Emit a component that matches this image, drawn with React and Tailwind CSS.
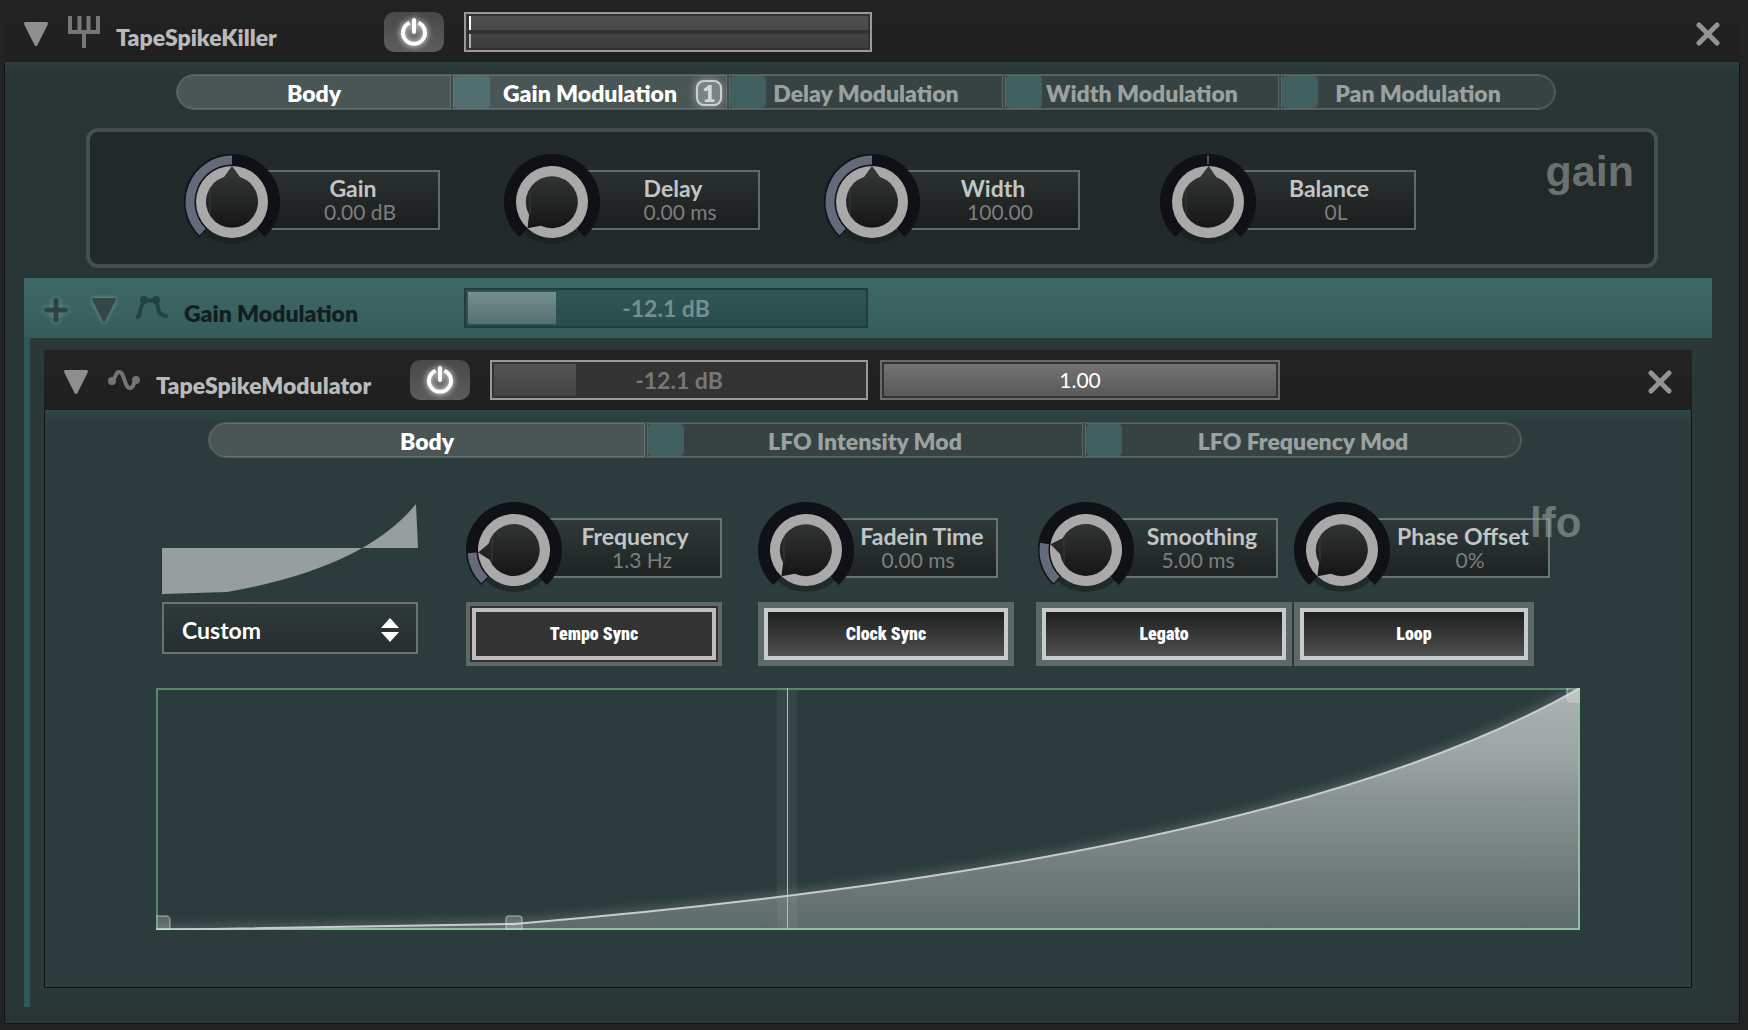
const deviceTabs = [
  { label: 'Body', active: true },
  { label: 'Gain Modulation', slot: true, active: true, count: 1 },
  { label: 'Delay Modulation', slot: true },
  { label: 'Width Modulation', slot: true },
  { label: 'Pan Modulation', slot: true },
];

const modulatorTabs = [
  { label: 'Body', active: true },
  { label: 'LFO Intensity Mod', slot: true },
  { label: 'LFO Frequency Mod', slot: true },
];

const KNOB_RANGE = 137;

// angle is measured clockwise from twelve o'clock
function polar(angle, r) {
  const a = (angle * Math.PI) / 180;
  return `${(r * Math.sin(a)).toFixed(2)} ${(-r * Math.cos(a)).toFixed(2)}`;
}

function arc(from, to, r) {
  return `M${polar(from, r)}A${r} ${r} 0 ${to - from > 180 ? 1 : 0} 1 ${polar(to, r)}`;
}

function KnobDial({ id, angle, from = -KNOB_RANGE }) {
  return (
    <svg viewBox="-48 -48 96 96" className="relative z-10 size-24 shrink-0" aria-hidden="true">
      <defs>
        <linearGradient id={id} x1="0" y1="0" x2="0" y2="1">
          <stop offset="0.1" stopColor="#333636" />
          <stop offset="0.85" stopColor="#161616" />
        </linearGradient>
      </defs>
      <circle cy="0" r="42" fill="#16201e" fillOpacity="0.6" />
      <path d={arc(-KNOB_RANGE, KNOB_RANGE, 42)} fill="none" stroke="#101116" strokeWidth="12" />
      {angle > from && (
        <path d={arc(from === -KNOB_RANGE ? from + 1.5 : from, angle, 42)} fill="none" stroke="#656a7b" strokeWidth="9" />
      )}
      <circle r="35.5" fill={`url(#${id})`} />
      <path d="M-22-12V12" stroke="#3a3d3d" strokeWidth="1" />
      <path
        d="M0-36A36 36 0 1 1 0 36A36 36 0 1 1 0-36ZM0-36L8-25A26 26 0 1 1-8-25Z"
        fill="#a9a9a9"
        fillRule="evenodd"
        transform={`rotate(${angle})`}
      />
    </svg>
  );
}

function Knob({ id, label, value, angle, from, narrow, lfo }) {
  return (
    <label className={`relative flex items-start ${narrow ? 'w-60' : 'w-64'}`}>
      <KnobDial id={id} angle={angle} from={from} />
      <span
        className={`mt-4 -ml-12 flex h-15 flex-1 flex-col justify-center border-2 text-center whitespace-nowrap ${
          lfo ? 'border-[#697372] bg-linear-to-b from-[#303a3b] to-[#1e2323]' : 'border-[#656868] bg-linear-to-b from-[#2a3030] to-[#1b1e1e]'
        }`}
      >
        <span className={`text-[23px] leading-6 font-bold text-[#c3c5c5] ${narrow ? 'pl-10' : 'pl-[34px]'}`}>{label}</span>
        <span className={`text-[21px] leading-6 text-[#7b7f7f] ${narrow ? 'pl-8' : 'pl-12'}`}>{value}</span>
      </span>
      <input
        type="range"
        min={-KNOB_RANGE}
        max={KNOB_RANGE}
        defaultValue={angle}
        className="absolute inset-0 z-20 h-full w-full cursor-pointer opacity-0"
      />
    </label>
  );
}

function Tabs({ tabs, label }) {
  return (
    <div role="tablist" aria-label={label} className="flex h-9 gap-0.5 overflow-hidden rounded-full border border-[#505b5a] bg-[#3d4847]">
      {tabs.map((tab, i) => (
        <button
          key={tab.label}
          type="button"
          role="tab"
          aria-selected={!!tab.active}
          className={`relative flex flex-1 items-center justify-center border pt-0.5 text-[23px] font-extrabold whitespace-nowrap ${
            i === 0 ? 'rounded-l-full' : ''
          } ${i === tabs.length - 1 ? 'rounded-r-full' : ''} ${
            tab.active ? 'border-[#667170] bg-[#4a5555] text-white' : 'border-[#5a6564] bg-[#374243] text-[#9aa1a0]'
          }`}
        >
          {tab.slot && (
            <span className={`absolute inset-y-0 left-0 w-9 rounded ${tab.active ? 'bg-[#526f6f]' : 'bg-[#3f605e]'}`} />
          )}
          {tab.label}
          {tab.count && (
            <span className="absolute top-1 right-1 flex size-[26px] items-center justify-center rounded-lg border-2 border-[#ccd0d0] bg-[#7b8484] leading-none text-[#d6d9d9] shadow-[0_0_8px_#a0a8a8]">
              {tab.count}
            </span>
          )}
        </button>
      ))}
    </div>
  );
}

function Collapse({ tone }) {
  return (
    <button type="button" aria-label="Collapse" className="mt-1 shrink-0">
      <svg viewBox="0 0 24 24" className={`block size-6 overflow-visible ${tone}`} fill="currentColor" stroke="currentColor" strokeWidth="3" strokeLinejoin="round">
        <path d="M1.5 1.5H22.5L12 22.5Z" />
      </svg>
    </button>
  );
}

function Power({ label }) {
  return (
    <button
      type="button"
      aria-label={label}
      aria-pressed="true"
      className="flex h-10 w-15 shrink-0 items-center justify-center rounded-[10px] bg-linear-to-b from-[#484848] to-[#5c5c5c]"
    >
      <svg viewBox="0 0 28 28" className="size-7 overflow-visible drop-shadow-[0_0_3px_#ffffff]" fill="none" stroke="#fff" strokeWidth="4">
        <path d="M9.5 4.8A11 11 0 1 0 18.5 4.8" />
        <path d="M14 2V14" strokeLinecap="round" />
      </svg>
    </button>
  );
}

function Close() {
  return (
    <button type="button" aria-label="Remove" className="mt-1 ml-auto shrink-0">
      <svg viewBox="0 0 24 24" className="block size-6" fill="none" stroke="#939393" strokeWidth="5" strokeLinecap="round">
        <path d="M3 3L21 21M21 3L3 21" />
      </svg>
    </button>
  );
}

function SyncButton({ children, active, className = '' }) {
  return (
    <button
      type="button"
      className={`flex h-16 border-[#5c6968] font-['Impact','Roboto_Condensed','Roboto',sans-serif] text-lg font-black text-white ${
        active ? 'border-4 bg-[#352f2f] p-0.5' : 'border-6'
      } ${className}`}
    >
      <span
        className={`flex h-full w-full items-center justify-center border-4 ${
          active ? 'border-[#bebebe] bg-[#333333]' : 'border-[#c5cccb] bg-linear-to-b from-[#1e1f1f] to-[#505050]'
        }`}
      >
        {children}
      </span>
    </button>
  );
}

function CurveEditor() {
  return (
    <svg viewBox="0 0 1424 242" preserveAspectRatio="none" className="mx-[111px] mt-[22px] block h-[242px] w-auto" role="img" aria-label="LFO curve">
      <defs>
        <linearGradient id="curve-fill" gradientUnits="userSpaceOnUse" x1="0" y1="0" x2="0" y2="242">
          <stop offset="0" stopColor="#aeb4b4" />
          <stop offset="0.3" stopColor="#9aa3a2" />
          <stop offset="0.45" stopColor="#8b9494" />
          <stop offset="0.75" stopColor="#717d7c" />
          <stop offset="1" stopColor="#5c6a6a" />
        </linearGradient>
        <filter id="curve-glow" x="-5%" y="-5%" width="110%" height="110%">
          <feGaussianBlur stdDeviation="5" />
        </filter>
      </defs>
      <path d="M0 242L358 236Q1126 172 1424 0" fill="none" stroke="#a0aaaa" strokeWidth="6" strokeOpacity="0.4" filter="url(#curve-glow)" />
      <path d="M0 242L358 236Q1126 172 1424 0V242Z" fill="url(#curve-fill)" />
      <rect x="621" y="0" width="20" height="242" fill="#fff" fillOpacity="0.05" />
      <path d="M1 242V1H1424" fill="none" stroke="#57886c" strokeWidth="2" />
      <path d="M0 241H1423V0" fill="none" stroke="#8fbfa2" strokeWidth="2" />
      <path d="M0 242L358 236Q1126 172 1424 0" fill="none" stroke="#c9cccc" strokeWidth="2" />
      <g fill="#fff" fillOpacity="0.22" stroke="#d2d8d8" strokeOpacity="0.5" strokeWidth="1.5">
        <rect x="-6" y="228" width="20" height="22" rx="4" />
        <rect x="350" y="228" width="16" height="22" rx="3" />
        <rect x="1411" y="-8" width="20" height="22" rx="4" />
      </g>
      <path d="M631.5 0V242" stroke="#b5bcbc" strokeWidth="1" />
    </svg>
  );
}

export default function App() {
  return (
    <div className="min-h-screen bg-[#232323] pr-2 pb-[6px] pl-1 font-['Lato',sans-serif]">
      {/* Device header */}
      <header className="flex h-[62px] items-center bg-linear-to-b from-[#232323] to-[#1f1f1f] px-5 pt-0.5">
        <Collapse tone="text-[#8f8f8f]" />
        <svg viewBox="0 0 32 32" className="mr-4 ml-5 size-8 shrink-0" fill="none" stroke="#777" strokeWidth="4">
          <path d="M2 0V16H30V0M11.5 0V16M20.5 0V16M16 16V32" />
        </svg>
        <h1 className="w-[268px] shrink-0 pt-2.5 text-[23px] font-extrabold text-[#bababa]">TapeSpikeKiller</h1>
        <Power label="TapeSpikeKiller power" />
        <div className="ml-5 flex h-10 w-[408px] flex-col gap-1 border-2 border-[#999999] bg-[#333333] py-0.5 pr-0.5 pl-[3px]">
          <div className="flex-1 border-l-2 border-white bg-linear-to-b from-[#505050] to-[#494949]" />
          <div className="flex-1 border-l-2 border-[#b0b0b0] bg-linear-to-b from-[#454545] to-[#3d3d3d]" />
        </div>
        <Close />
      </header>

      <main className="border-x border-b border-[#121414] bg-[#293434] bg-linear-to-b from-[#2d3f3e] to-[#293434] to-[14px] pt-3 pr-[27px] pb-4 pl-[19px]">
        <div className="mr-[156px] ml-[152px]">
          <Tabs tabs={deviceTabs} label="TapeSpikeKiller chains" />
        </div>

        {/* Gain stage */}
        <section className="mt-[18px] mr-[54px] ml-[62px] flex h-[140px] rounded-xl border-4 border-[#454f4e] bg-[#22292a] pt-[22px] pl-[94px]">
          <Knob id="knob-gain" label="Gain" value="0.00 dB" angle={0} />
          <div className="ml-16">
            <Knob id="knob-delay" label="Delay" value="0.00 ms" angle={-KNOB_RANGE} />
          </div>
          <div className="ml-16">
            <Knob id="knob-width" label="Width" value="100.00" angle={0} />
          </div>
          <div className="ml-20">
            <Knob id="knob-balance" label="Balance" value="0L" angle={1} from={-1} />
          </div>
          <h2 className="-mt-2 mr-5 ml-auto font-['Liberation_Sans',sans-serif] text-[43px] leading-[50px] font-bold text-[#6a7170]">
            gain
          </h2>
        </section>

        {/* Gain modulation chain */}
        <section className="mt-2.5">
          <header className="flex h-15 items-center bg-linear-to-b from-[#3d6866] to-[#355c5b] px-5">
            <button type="button" aria-label="Add modulator" className="mr-6 shrink-0">
              <svg viewBox="0 0 24 24" className="mt-1 block size-6 overflow-visible drop-shadow-[0_0_3px_#6f9493]" stroke="#2d4342" strokeWidth="5" strokeLinecap="round">
                <path d="M12 2.5V21.5M2.5 12H21.5" />
              </svg>
            </button>
            <Collapse tone="text-[#334847] drop-shadow-[0_0_2px_#7fa3a2]" />
            <svg viewBox="0 0 32 24" className="mr-4 ml-5 h-6 w-8 shrink-0" fill="none" stroke="#234340" strokeWidth="4" strokeLinecap="round">
              <path d="M2 21C5 17 5 6 9 4.5H20C23 9 20 19 30 20" />
              <circle cx="8" cy="4" r="2" fill="#234340" />
              <circle cx="20" cy="4" r="2" fill="#234340" />
            </svg>
            <h2 className="w-70 shrink-0 pt-2.5 text-[23px] font-extrabold text-[#111f1e]">Gain Modulation</h2>
            <div className="relative flex h-10 w-[404px] items-center justify-center border-2 border-[#203c3b] bg-linear-to-b from-[#2f5656] to-[#2a4c4c] text-[23px] font-bold text-[#72908e]">
              <div className="absolute inset-y-0.5 left-0.5 w-[22%] bg-linear-to-b from-[#758f8f] to-[#547070]" />
              -12.1 dB
            </div>
          </header>

          <div className="border-l-6 border-[#315856] bg-[#2b3838] pt-3 pr-5 pb-[19px] pl-3.5">
            {/* LFO modulator */}
            <article>
              <header className="flex h-15 items-center bg-linear-to-b from-[#232323] to-[#1f1f1f] px-5">
                <Collapse tone="text-[#8f8f8f]" />
                <svg viewBox="0 0 32 24" className="mr-4 ml-5 h-6 w-8 shrink-0" fill="none" stroke="#747474" strokeWidth="4" strokeLinecap="round">
                  <path d="M4 13C9 9 7 4 11 4C17 4 16 20 22 20C26 20 25 15 28 12" />
                  <circle cx="4" cy="13" r="2" fill="#747474" />
                  <circle cx="28" cy="12" r="2" fill="#747474" />
                </svg>
                <h2 className="w-[254px] shrink-0 pt-2.5 text-[23px] font-extrabold text-[#bababa]">TapeSpikeModulator</h2>
                <Power label="TapeSpikeModulator power" />
                <div className="relative ml-5 flex h-10 w-[378px] items-center justify-center border-2 border-[#999999] bg-[#333333] text-[23px] font-bold text-[#777777]">
                  <div className="absolute inset-y-0.5 left-0.5 w-[22%] bg-linear-to-b from-[#545454] to-[#444444]" />
                  -12.1 dB
                </div>
                <label className="relative ml-3 flex h-10 w-[400px] border-2 border-[#6b6b6b] bg-[#333333] p-0.5">
                  <span className="flex flex-1 items-center justify-center bg-linear-to-b from-[#737373] to-[#5a5a5a] text-[21px] text-white">
                    1.00
                  </span>
                  <input type="range" min="0" max="1" step="0.01" defaultValue="1" aria-label="Intensity" className="absolute inset-0 h-full w-full opacity-0" />
                </label>
                <Close />
              </header>

              <div className="border-x border-b border-[#0c1515] bg-linear-to-b from-[#2f4546] to-[#2c3c3c] to-[14px] pt-3 pb-[57px]">
                <div className="mr-[169px] ml-[163px]">
                  <Tabs tabs={modulatorTabs} label="TapeSpikeModulator chains" />
                </div>

                <div className="mt-11 ml-[117px] flex items-start">
                  <div className="w-64 shrink-0">
                    <svg viewBox="0 0 256 90" className="mt-0.5 mb-2 block h-[90px] w-64" aria-hidden="true">
                      <path d="M0 44H256L254 0Q202 64 65 88L0 90Z" fill="#979f9e" />
                    </svg>
                    <div className="relative">
                      <select
                        aria-label="Waveform"
                        defaultValue="Custom"
                        className="h-13 w-full appearance-none border-2 border-[#697372] bg-linear-to-b from-[#303a3b] to-[#262e2d] pt-1 pl-[18px] text-[23px] font-bold text-white"
                      >
                        <option>Custom</option>
                        <option>Sine</option>
                      </select>
                      <svg viewBox="0 0 18 24" className="pointer-events-none absolute top-4 right-[19px] h-6 w-[18px]" fill="#fff">
                        <path d="M9 0L18 10H0ZM9 24L18 14H0Z" />
                      </svg>
                    </div>
                  </div>
                  <div className="ml-12 w-64 shrink-0">
                    <Knob id="knob-frequency" label="Frequency" value="1.3 Hz" angle={-94} lfo />
                    <SyncButton active className="mt-1 w-full">Tempo Sync</SyncButton>
                  </div>
                  <div className="ml-9 w-64 shrink-0">
                    <Knob id="knob-fadein" label="Fadein Time" value="0.00 ms" angle={-KNOB_RANGE} narrow lfo />
                    <SyncButton className="mt-1 w-full">Clock Sync</SyncButton>
                  </div>
                  <div className="ml-[22px] w-64 shrink-0">
                    <div className="pl-0.5">
                      <Knob id="knob-smoothing" label="Smoothing" value="5.00 ms" angle={-81} narrow lfo />
                    </div>
                    <SyncButton className="mt-1 w-full">Legato</SyncButton>
                  </div>
                  <div className="ml-0.5 w-64 shrink-0">
                    <Knob id="knob-phase" label="Phase Offset" value="0%" angle={-KNOB_RANGE} lfo />
                    <SyncButton className="mt-1 w-60">Loop</SyncButton>
                  </div>
                  <h3 className="relative z-10 -ml-5 font-['Liberation_Sans',sans-serif] text-[42px] leading-[42px] font-bold text-[#98a3a2]/60">
                    lfo
                  </h3>
                </div>

                <CurveEditor />
              </div>
            </article>
          </div>
        </section>
      </main>
    </div>
  );
}
